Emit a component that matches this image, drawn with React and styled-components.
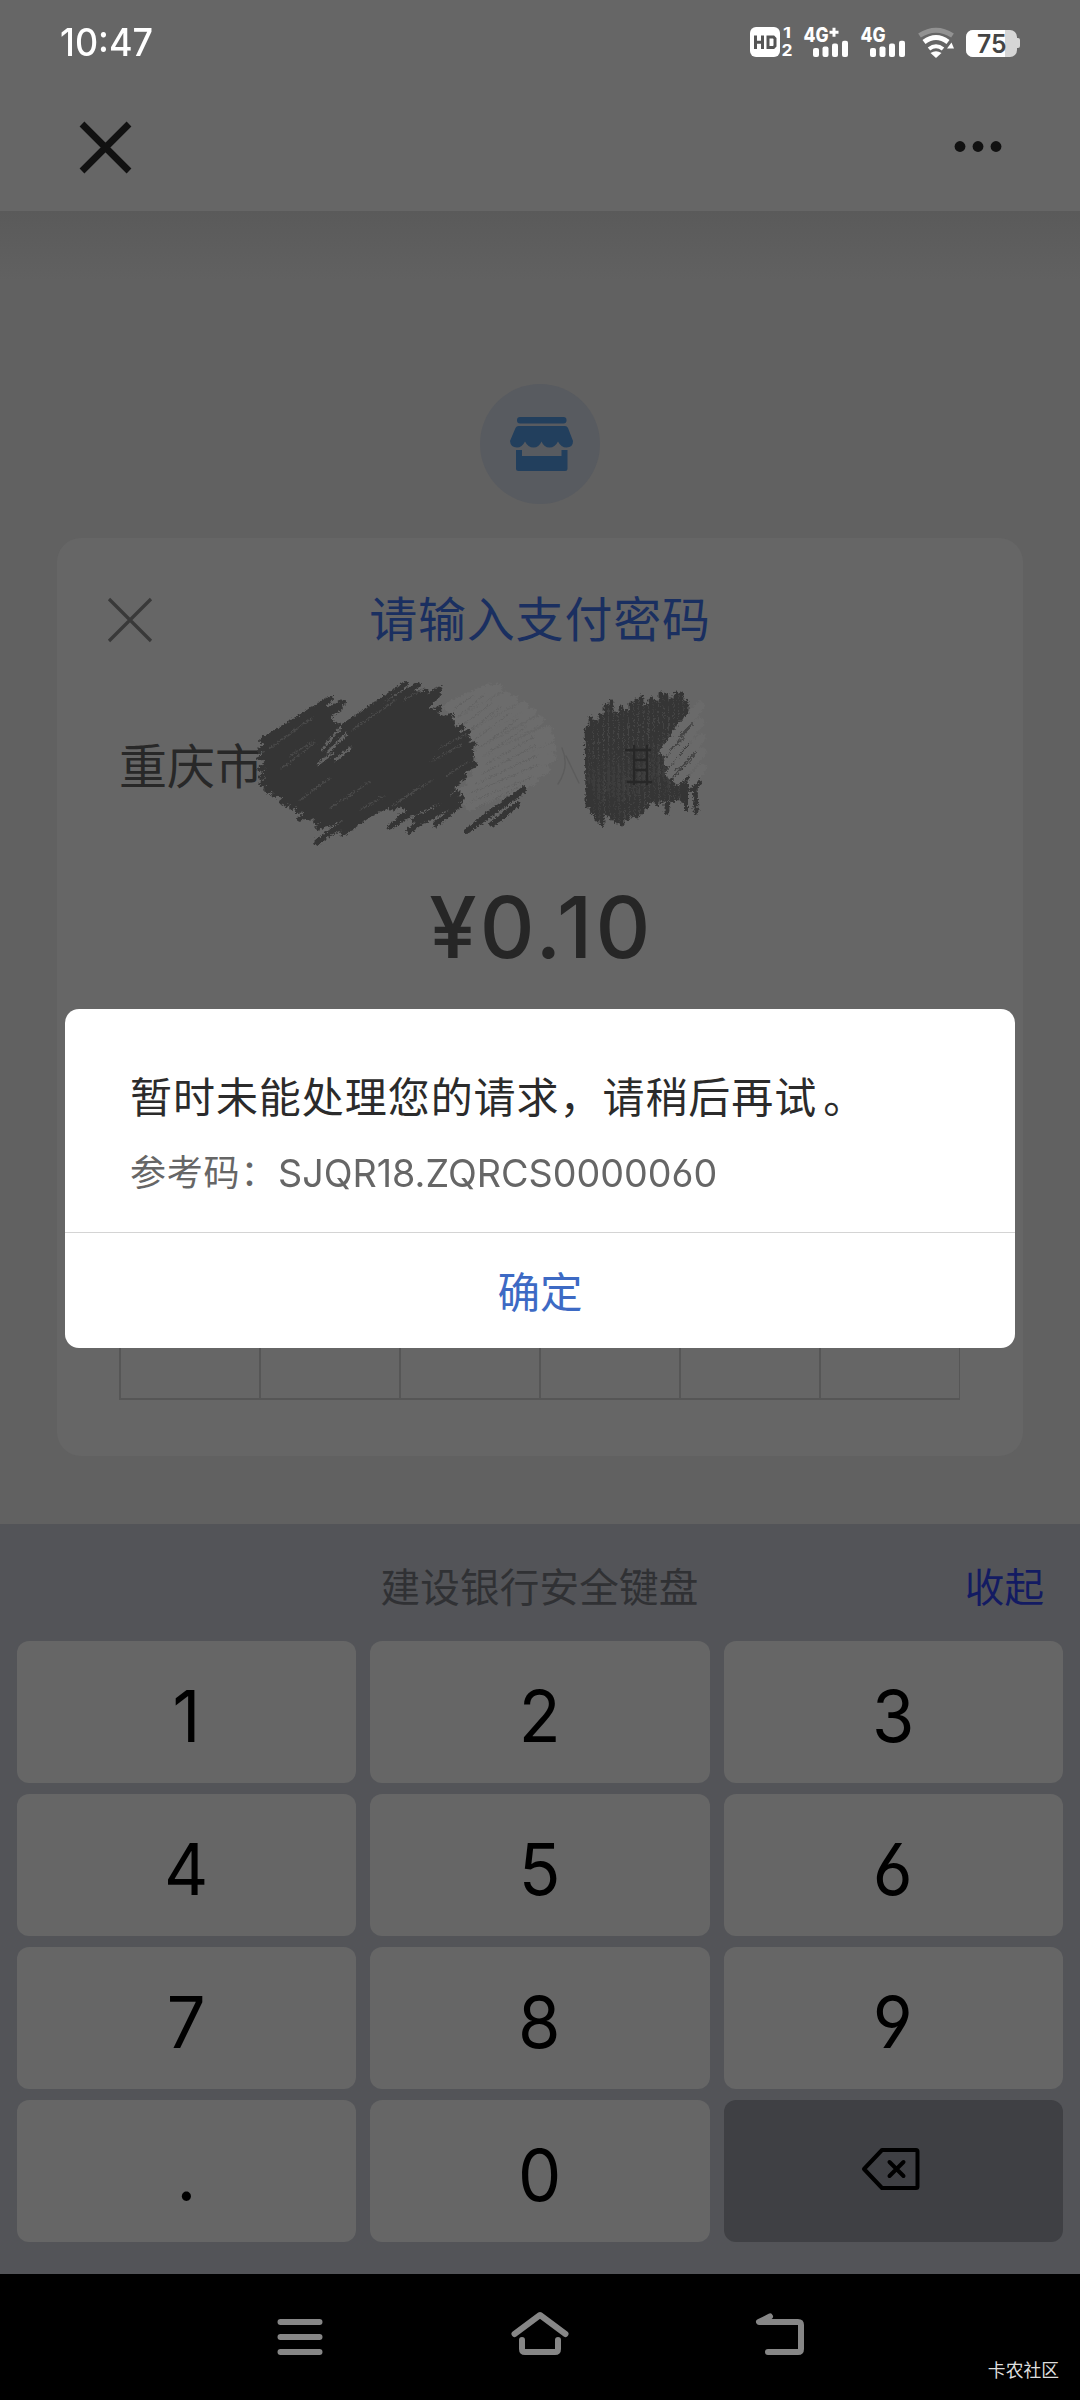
import React from 'react';
import styled, { createGlobalStyle } from 'styled-components';

const FONT = 'Inter, "Noto Sans CJK SC", sans-serif';

const GlobalStyle = createGlobalStyle`
  * { box-sizing: border-box; }
  body { margin: 0; background: #616161; font-family: ${FONT}; }
`;

const Screen = styled.div`
  position: relative;
  width: 1080px;
  height: 2400px;
  display: flex;
  flex-direction: column;
  overflow: hidden;
  background: #616161;
  font-feature-settings: 'cv03', 'cv04';
`;

const StatusBar = styled.div`
  height: 84px;
  padding: 0 59px 0 60px;
  display: flex;
  align-items: center;
  justify-content: space-between;
  background: #666;
  color: #fff;
`;

const Squeeze = styled.span`
  display: inline-block;
  white-space: nowrap;
  transform: scaleX(${(p) => p.$x});
  transform-origin: ${(p) => p.$origin || 'left'} center;
`;

const Clock = styled.div`
  font-size: 38px;
  line-height: 44px;
  font-weight: 500;
`;

const AppHeader = styled.header`
  height: 127px;
  padding: 0 77px 1px 78px;
  display: flex;
  align-items: center;
  justify-content: space-between;
  background: #666;
`;

const Page = styled.main`
  height: 1313px;
  padding: 173px 57px 0 57px;
  display: flex;
  flex-direction: column;
  align-items: center;
  background: linear-gradient(#5a5a5a, #616161 70px);
`;

const StoreBadge = styled.div`
  width: 120px;
  height: 120px;
  padding-left: 2px;
  flex: none;
  border-radius: 50%;
  background: #585b60;
  display: flex;
  align-items: center;
  justify-content: center;
`;

const Card = styled.section`
  width: 966px;
  height: 918px;
  margin-top: 34px;
  padding-bottom: 56px;
  border-radius: 24px;
  background: #666;
  display: flex;
  flex-direction: column;
`;

const CardHeader = styled.div`
  height: 165px;
  padding: 0 48px 2px;
  display: grid;
  grid-template-columns: 48px 1fr 48px;
  align-items: center;
`;

const CardTitle = styled.h1`
  margin: 0;
  text-align: center;
  font-size: 48px;
  line-height: 60px;
  font-weight: 400;
  letter-spacing: 0.8px;
  color: #1a2f60;
`;

const Merchant = styled.div`
  position: relative;
  height: 125px;
  padding: 2px 0 0 62px;
  display: flex;
  align-items: center;
  font-size: 48px;
  line-height: 60px;
  color: #282828;
`;

const ScribbleLayer = styled.svg`
  position: absolute;
  left: 183px;
  top: -33px;
`;

const Amount = styled.div`
  height: 199px;
  display: flex;
  align-items: center;
  justify-content: center;
  padding-left: 3px;
  font-size: 85px;
  letter-spacing: 3.2px;
  font-weight: 500;
  color: #262626;
`;

const PinRow = styled.div`
  margin: auto 63px 0 62px;
  height: 140px;
  display: grid;
  grid-template-columns: repeat(6, 1fr);
  border: solid #565656;
  border-width: 2px 1px 2px 0;
`;

const PinCell = styled.div`
  border-left: 2px solid #565656;
`;

const Keyboard = styled.section`
  height: 750px;
  background: #535458;
`;

const KeyboardBar = styled.div`
  height: 117px;
  padding: 11px 36px 0 35px;
  display: grid;
  grid-template-columns: 120px 1fr 120px;
  align-items: start;
  font-size: 39.6px;
`;

const BarLabel = styled.div`
  grid-column: 2;
  line-height: 107px;
  text-align: center;
  letter-spacing: 0.2px;
  color: #303134;
`;

const Collapse = styled.div`
  line-height: 107px;
  text-align: right;
  color: #131b62;
`;

const Keys = styled.div`
  padding: 0 17px;
  display: grid;
  grid-template-columns: repeat(3, 1fr);
  grid-auto-rows: 142px;
  gap: 11px 14px;
`;

const Key = styled.div`
  border-radius: 12px;
  background: ${(p) => (p.$dark ? '#3f4044' : '#666')};
  display: flex;
  align-items: center;
  justify-content: center;
  padding: ${(p) => (p.$dark ? '0 5px 4px 0' : '8px 1px 0 0')};
  font-size: 71.5px;
  line-height: 80px;
  color: #000;
`;

const NavBar = styled.nav`
  height: 126px;
  padding-top: 33px;
  display: flex;
  justify-content: center;
  gap: 180px;
  background: #000;
`;

const Watermark = styled.div`
  position: absolute;
  right: 21px;
  bottom: 17px;
  font-size: 17.8px;
  line-height: 24px;
  color: #dedede;
`;

const Dialog = styled.div`
  position: absolute;
  left: 65px;
  top: 1009px;
  width: 950px;
  height: 339px;
  border-radius: 14px;
  background: #fff;
  display: flex;
  flex-direction: column;
`;

const DialogBody = styled.div`
  height: 224px;
  padding: 59px 66px 0 65px;
  border-bottom: 1px solid #d4d4d4;
`;

const Message = styled.div`
  font-size: 42px;
  line-height: 60px;
  letter-spacing: 0.95px;
  color: #2b2b2b;
  white-space: nowrap;
`;

const FullStop = styled.span`
  margin-left: 6px;
`;

const Reference = styled.div`
  margin-top: 19px;
  display: flex;
  align-items: center;
  line-height: 52px;
  white-space: nowrap;
  color: #666;
`;

const RefLabel = styled.span`
  width: 148px;
  flex: none;
  font-size: 36px;
  letter-spacing: 0.8px;
`;

const RefCode = styled.span`
  font-size: 38px;
`;

const Confirm = styled.div`
  flex: 1;
  display: flex;
  align-items: center;
  justify-content: center;
  padding-bottom: 3px;
  font-size: 42.5px;
  color: #3d6ac4;
`;

const SignalText = ({ x, children, w }) => (
  <text x={x} y="42" fontFamily="Inter, sans-serif" fontSize="19.5" fontWeight="800" textLength={w} lengthAdjust="spacingAndGlyphs">{children}</text>
);

const Bars = ({ x }) => (
  <g>
    {[[0, 48], [9.5, 46.5], [19, 43.5], [29, 40.7]].map(([dx, top]) => (
      <rect key={dx} x={x + dx} y={top} width="6" height={57 - top} rx="2" />
    ))}
  </g>
);

const StatusIcons = () => (
  <svg width="272" height="84" viewBox="749 0 272 84" fill="#fff">
    <rect x="750" y="27" width="30" height="30" rx="6" />
    <g fill="none" stroke="#555" strokeWidth="3">
      <path d="M755.5 35.5V49M762.5 35.5V49M755.5 42.3H762.5" />
      <path d="M768 37H773.5L775 38.5V46L773.5 47.5H768Z" />
    </g>
    <text x="783" y="38" fontFamily="Inter, sans-serif" fontSize="15" fontWeight="700" textLength="8" lengthAdjust="spacingAndGlyphs">1</text>
    <text x="781.5" y="56" fontFamily="Inter, sans-serif" fontSize="16" fontWeight="700" textLength="11" lengthAdjust="spacingAndGlyphs">2</text>
    <SignalText x={803.5} w={25}>4G</SignalText>
    <path d="M829.5 32.2H838.5M834 27.7V36.7" stroke="#fff" strokeWidth="3" />
    <Bars x={813} />
    <SignalText x={860.5} w={25}>4G</SignalText>
    <Bars x={870} />
    <g fill="none">
      <path d="M919.5 35.5Q936 25 952.5 35.5" stroke="#929292" strokeWidth="5" />
      <path d="M924 42Q936 33 948 42" stroke="#fff" strokeWidth="5" />
      <path d="M929 49Q936 43.5 943 49" stroke="#fff" strokeWidth="4" />
    </g>
    <path d="M936 58L930.5 53Q936 49.5 941.5 53Z" />
    <path d="M947 48.5L951.5 42.5L954 48.5Z" />
    <rect x="966" y="30" width="51" height="27" rx="7" fill="#d6d6d6" />
    <path d="M1005 30H973a7 7 0 0 0-7 7V50a7 7 0 0 0 7 7H1005Z" />
    <path d="M1017 38h1a2 2 0 0 1 2 2v6a2 2 0 0 1-2 2h-1Z" fill="#d6d6d6" />
    <text x="977" y="53" fontFamily="Inter, sans-serif" fontSize="25.5" fontWeight="600" fill="#444" textLength="29.5" lengthAdjust="spacingAndGlyphs">75</text>
  </svg>
);

const CloseIcon = ({ size, stroke, color }) => (
  <svg width={size} height={size} viewBox={`0 0 ${size} ${size}`}>
    <path d={`M4 4L${size - 4} ${size - 4}M${size - 4} 4L4 ${size - 4}`} stroke={color} strokeWidth={stroke} fill="none" />
  </svg>
);

const MoreIcon = () => (
  <svg width="50" height="12" viewBox="0 0 50 12" fill="#111">
    <circle cx="7" cy="5.5" r="5.4" />
    <circle cx="25" cy="5.5" r="5.4" />
    <circle cx="43" cy="5.5" r="5.4" />
  </svg>
);

const StoreIcon = () => (
  <svg width="64" height="56" viewBox="509 416 64 56" fill="#223f5d">
    <rect x="517" y="417" width="49.5" height="6.4" rx="3" />
    <path d="M515.5 428Q516.5 426 518.5 426H565Q567 426 568 428L573 441Q573 447.5 566.5 447.5Q561 447.5 558 441.5Q555 447.5 549.5 447.5Q544 447.5 541.5 441.5Q539 447.5 533.5 447.5Q528 447.5 525 441.5Q522 447.5 517 447.5Q510.5 447.5 510 441Z" />
    <path d="M516 450H522V456H561.5V450H567.5V468.5Q567.5 471 565 471H518.5Q516 471 516 468.5Z" />
  </svg>
);

const DARK = [
  [262, 741, 330, 699], [260, 750, 343, 702], [260, 758, 340, 708], [260, 769, 328, 718], [261, 777, 326, 728],
  [262, 784, 334, 734], [266, 789, 348, 730], [326, 738, 406, 684], [334, 736, 418, 685], [268, 791, 426, 692],
  [274, 795, 440, 689], [282, 802, 438, 695], [286, 804, 430, 703], [292, 807, 440, 708], [298, 811, 451, 716],
  [299, 819, 452, 722], [308, 818, 462, 727], [316, 822, 468, 732], [318, 828, 468, 739], [330, 824, 474, 744],
  [317, 842, 372, 803], [328, 834, 470, 757], [336, 830, 475, 764], [343, 833, 384, 804], [354, 812, 464, 777],
  [364, 808, 458, 783], [380, 806, 452, 788], [392, 808, 450, 776], [390, 827, 448, 788], [400, 818, 452, 790],
  [409, 831, 458, 793], [414, 820, 462, 798], [426, 820, 459, 800], [436, 824, 459, 805], [467, 831, 524, 790],
  [479, 821, 524, 789], [492, 824, 518, 804],
];

const DARK_BODY = 'M264 742L326 704L334 722L346 726L404 690L426 692L428 706L448 720L466 738L474 752L473 766L454 786L448 800L414 816L400 806L386 800L346 820L322 824L304 812L284 800L266 786Z';

const PALE = [
  [448, 707, 488, 688], [452, 715, 498, 688], [458, 722, 506, 696], [462, 730, 514, 700], [468, 738, 524, 706],
  [476, 744, 532, 712], [478, 754, 540, 720], [480, 762, 548, 730], [476, 772, 550, 738], [470, 782, 552, 748],
  [462, 792, 552, 758], [464, 800, 546, 770], [470, 806, 534, 780],
];

const GAPS = [
  [322, 750, 340, 728], [328, 752, 346, 734], [318, 764, 332, 754], [336, 760, 350, 748],
];

const STREAKS = [
  [270, 748, 312, 718], [282, 768, 316, 742], [330, 808, 370, 782],
  [346, 798, 364, 786], [400, 800, 432, 780], [440, 748, 466, 734], [404, 700, 424, 688],
  [360, 810, 384, 796], [446, 776, 468, 762], [300, 800, 330, 778], [392, 806, 414, 792],
  [352, 730, 396, 700], [290, 756, 312, 742], [430, 762, 462, 744],
];

const COLUMNS = [
  [587, 728, 806], [591, 718, 812], [596, 722, 820], [601, 716, 824], [606, 706, 814], [611, 702, 818],
  [616, 714, 822], [621, 708, 824], [626, 712, 818], [631, 704, 815], [636, 700, 816], [641, 698, 812],
  [646, 706, 806], [651, 699, 800], [656, 702, 804], [661, 694, 800], [666, 696, 812], [671, 700, 800],
  [676, 694, 798], [681, 694, 800], [686, 702, 790], [695, 780, 812],
];

const line = ([x1, y1, x2, y2]) => `M${x1} ${y1}L${x2} ${y2}`;

const Scribble = () => (
  <ScribbleLayer width="480" height="190" viewBox="240 670 480 190" fill="none" strokeLinecap="round">
    <defs>
      <filter id="rough" x="-5%" y="-5%" width="110%" height="110%">
        <feTurbulence type="fractalNoise" baseFrequency="0.45" numOctaves="2" seed="4" result="n" />
        <feDisplacementMap in="SourceGraphic" in2="n" scale="6" xChannelSelector="R" yChannelSelector="G" />
      </filter>
    </defs>
    <g filter="url(#rough)">
      <path d={PALE.map(line).join('')} stroke="#6c6c6c" strokeWidth="9" />
      <path d={PALE.map(([a, b, c, d]) => line([a + 6, b + 2, c - 14, d + 7])).join('')} stroke="#606060" strokeWidth="0.8" />
      <path d={DARK_BODY} fill="#363636" />
      <path d={DARK.map(line).join('')} stroke="#363636" strokeWidth="5.6" />
      <path d={GAPS.map(line).join('')} stroke="#646464" strokeWidth="2.6" />
      <path d={STREAKS.map(line).join('')} stroke="#4a4a4a" strokeWidth="1.2" />
      <path d={COLUMNS.map(([x, t, b]) => line([x, t, x + 1, b])).join('')} stroke="#353535" strokeWidth="4.8" />
      <path d={COLUMNS.map(([x, t, b]) => line([x + 2.5, t + 14, x + 2, b - 22])).join('')} stroke="#464646" strokeWidth="0.8" />
      <path d="M664 752L697 710M668 762L700 722M670 774L701 738M678 780L702 752M692 782L702 768M676 734L700 706" stroke="#6b6b6b" strokeWidth="9" />
      <path d="M670 750L684 738M684 764L696 752M676 770L690 762M680 736L692 724" stroke="#444" strokeWidth="1.8" />
      <path d="M700 782L691 790M686 785L686 810" stroke="#353535" strokeWidth="4" />
    </g>
    <path d="M626 750H650M634 746V784M647 746V784M634 760H647M634 770H647M628 782H651" stroke="#272727" strokeWidth="2.4" />
    <path d="M562 748Q570 766 558 784M566 756L579 783" stroke="#5c5c5c" strokeWidth="1.4" />
  </ScribbleLayer>
);

const BackspaceIcon = () => (
  <svg width="60" height="44" viewBox="861 2147 60 44" fill="none" stroke="#000" strokeWidth="4" strokeLinejoin="round" strokeLinecap="round">
    <path d="M882 2150H916Q917.5 2150 917.5 2151.5V2186.5Q917.5 2188 916 2188H882L864 2169Z" />
    <path d="M889.5 2162L903.5 2176M903.5 2162L889.5 2176" />
  </svg>
);

const NavIcon = ({ d }) => (
  <svg width="60" height="60" viewBox="0 0 60 60" fill="none" stroke="#868686" strokeWidth="6" strokeLinecap="round" strokeLinejoin="round">
    <path d={d} />
  </svg>
);

const KEYS = ['1', '2', '3', '4', '5', '6', '7', '8', '9', '.', '0'];

export default function App() {
  return (
    <Screen>
      <GlobalStyle />
      <StatusBar>
        <Clock><Squeeze $x={0.945}>10:47</Squeeze></Clock>
        <StatusIcons />
      </StatusBar>
      <AppHeader>
        <CloseIcon size={55} stroke={6.8} color="#111" />
        <MoreIcon />
      </AppHeader>
      <Page>
        <StoreBadge><StoreIcon /></StoreBadge>
        <Card>
          <CardHeader>
            <CloseIcon size={50} stroke={3.2} color="#393939" />
            <CardTitle>请输入支付密码</CardTitle>
          </CardHeader>
          <Merchant>
            重庆市
            <Scribble />
          </Merchant>
          <Amount>¥0.10</Amount>
          <PinRow>
            {[0, 1, 2, 3, 4, 5].map((i) => <PinCell key={i} />)}
          </PinRow>
        </Card>
      </Page>
      <Keyboard>
        <KeyboardBar>
          <BarLabel>建设银行安全键盘</BarLabel>
          <Collapse>收起</Collapse>
        </KeyboardBar>
        <Keys>
          {KEYS.map((k) => (
            <Key key={k}><Squeeze $x={0.96} $origin="center">{k}</Squeeze></Key>
          ))}
          <Key $dark><BackspaceIcon /></Key>
        </Keys>
      </Keyboard>
      <NavBar>
        <NavIcon d="M10.5 15H49.5M10.5 30H49.5M10.5 45H49.5" />
        <NavIcon d="M4.5 27L30 8L55.5 27M12 33V42Q12 45 15 45H45Q48 45 48 42V33" />
        <NavIcon d="M20 9.5L9 15H48Q51 15 51 18V42Q51 45 48 45H18" />
      </NavBar>
      <Dialog>
        <DialogBody>
          <Message>暂时未能处理您的请求，请稍后再试<FullStop>。</FullStop></Message>
          <Reference>
            <RefLabel>参考码：</RefLabel>
            <RefCode><Squeeze $x={0.992}>SJQR18.ZQRCS0000060</Squeeze></RefCode>
          </Reference>
        </DialogBody>
        <Confirm>确定</Confirm>
      </Dialog>
      <Watermark>卡农社区</Watermark>
    </Screen>
  );
}
